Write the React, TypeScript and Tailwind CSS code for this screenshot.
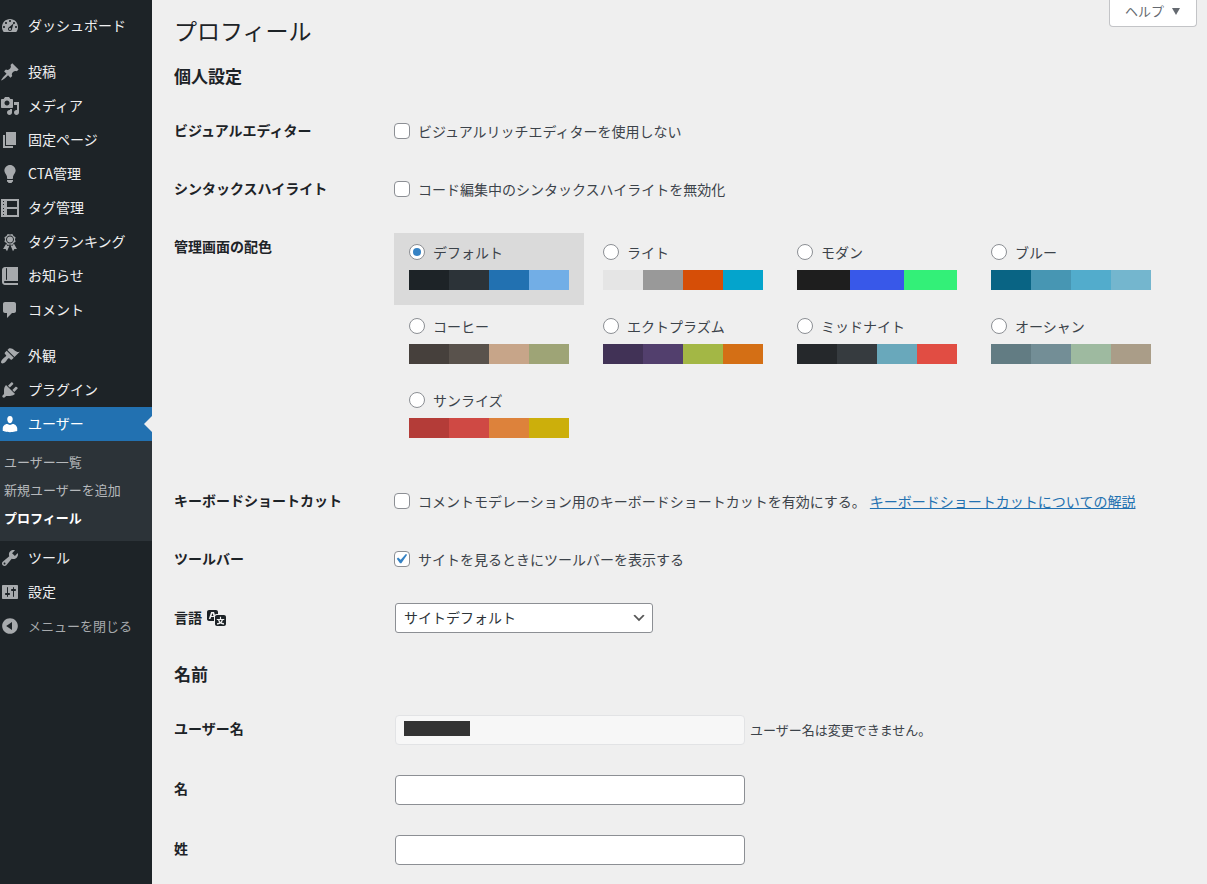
import { useState } from "react";
import type { ReactNode } from "react";
import clsx from "clsx";

const icons = {
  dashboard:
    "M3.76 16h12.48c1.1-1.37 1.76-3.11 1.76-5 0-4.42-3.58-8-8-8s-8 3.58-8 8c0 1.89.66 3.63 1.76 5zM10 4c.55 0 1 .45 1 1s-.45 1-1 1-1-.45-1-1 .45-1 1-1zM6 6c.55 0 1 .45 1 1s-.45 1-1 1-1-.45-1-1 .45-1 1-1zm8 0c.55 0 1 .45 1 1s-.45 1-1 1-1-.45-1-1 .45-1 1-1zm-.5 1.5L12 13c0 1.1-.9 2-2 2s-2-.9-2-2c0-.57.24-1.08.63-1.45zM4 10c.55 0 1 .45 1 1s-.45 1-1 1-1-.45-1-1 .45-1 1-1zm12 0c.55 0 1 .45 1 1s-.45 1-1 1-1-.45-1-1 .45-1 1-1zm-5 3c0-.55-.45-1-1-1s-1 .45-1 1 .45 1 1 1 1-.45 1-1z",
  post: "M10.44 3.02l1.82-1.82 6.36 6.35-1.83 1.82c-1.05-.68-2.48-.57-3.41.36l-.75.75c-.92.93-1.04 2.35-.35 3.41l-1.83 1.82-2.41-2.41-2.8 2.79c-.42.42-3.38 2.71-3.8 2.29s1.86-3.39 2.28-3.81l2.79-2.79L4.1 9.36l1.83-1.82c1.05.69 2.48.57 3.4-.36l.75-.75c.93-.92 1.05-2.35.36-3.41z",
  media:
    "M13 11V4c0-.55-.45-1-1-1h-1.67L9 1H5L3.67 3H2c-.55 0-1 .45-1 1v7c0 .55.45 1 1 1h10c.55 0 1-.45 1-1zM7 4.5c1.38 0 2.5 1.12 2.5 2.5S8.38 9.5 7 9.5 4.5 8.38 4.5 7 5.62 4.5 7 4.5zM14 6h5v10.5c0 1.38-1.12 2.5-2.5 2.5S14 17.88 14 16.5s1.12-2.5 2.5-2.5c.17 0 .34.02.5.05V9h-3V6zm-4 8.05V13h2v3.5c0 1.38-1.12 2.5-2.5 2.5S7 17.88 7 16.5 8.12 14 9.5 14c.17 0 .34.02.5.05z",
  page: "M6 15V2h10v13H6zm-1 1h8v2H3V5h2v11z",
  bulb: "M10 1c3.11 0 5.63 2.52 5.63 5.62 0 1.84-2.03 4.58-2.03 4.58-.33.44-.6 1.25-.6 1.8v1c0 .55-.45 1-1 1H8c-.55 0-1-.45-1-1v-1c0-.55-.27-1.36-.6-1.8 0 0-2.02-2.74-2.02-4.58C4.38 3.52 6.89 1 10 1zM7 16.87V16h6v.87c0 .62-.13 1.13-.75 1.13H12c0 .62-.4 1-1.02 1h-2c-.61 0-.98-.38-.98-1h-.25c-.62 0-.75-.51-.75-1.13z",
  tag: "M1 1h18v18H1zM3 3v1h1V3zM3 6v1h1V6zM3 10v1h1v-1zM3 13v1h1v-1zM3 16v1h1v-1zM7 3v6h10V3zM7 11v6h10v-6z",
  awards:
    "M4.46 5.16L5 7.46l-.54 2.29 2.01 1.24L7.7 13l2.3-.54 2.3.54 1.23-2.01 2.01-1.24L15 7.46l.54-2.3-2-1.24-1.24-2.01-2.3.55-2.29-.54-1.25 2zm5.55 6.34c-2.2 0-3.98-1.79-3.98-3.98 0-2.2 1.78-3.98 3.98-3.98 2.19 0 3.98 1.78 3.98 3.98 0 2.19-1.79 3.98-3.98 3.98zM10 10.5a3 3 0 1 0 0-6 3 3 0 0 0 0 6zM13.85 11.6l-1.28 2.24-2.08-.47L13 19.2l1.4-2.2h2.5zM6.15 11.67l1.25 2.25 2.13-.51L7 19.2 5.6 17H3.1z",
  book: "M5 17h13v2H5c-1.66 0-3-1.34-3-3V4c0-1.66 1.34-3 3-3h13v14H5c-.55 0-1 .45-1 1s.45 1 1 1zm2-3.5v-11c0-.28-.22-.5-.5-.5s-.5.22-.5.5v11c0 .28.22.5.5.5s.5-.22.5-.5z",
  comment:
    "M5 2h9c1.1 0 2 .9 2 2v7c0 1.1-.9 2-2 2h-2l-5 5v-5H5c-1.1 0-2-.9-2-2V4c0-1.1.9-2 2-2z",
  appearance:
    "M14.48 11.06L7.41 3.99l1.5-1.5c.5-.56 2.3-.47 3.51.32 1.21.8 1.43 1.28 2.91 2.1 1.18.64 2.45 1.26 4.45.85zm-.71.71L6.7 4.7 4.93 6.47c-.39.39-.39 1.02 0 1.41l1.06 1.06c.39.39.39 1.03 0 1.42-.6.6-1.43 1.11-2.21 1.69-.35.26-.7.53-1.01.84C1.43 14.23.4 16.08 1.4 17.07c.99 1 2.84-.03 4.18-1.36.31-.31.58-.66.85-1.02.57-.78 1.08-1.61 1.69-2.21.39-.39 1.02-.39 1.41 0l1.06 1.06c.39.39 1.02.39 1.41 0z",
  plugins:
    "M13.11 4.36L9.87 7.6 8 5.73l3.24-3.24c.35-.34 1.05-.2 1.56.32.52.51.66 1.21.31 1.55zm-8 1.77l.91-1.12 9.01 9.01-1.19.84c-.71.71-2.63 1.16-3.82 1.16H6.14L4.9 17.26c-.59.59-1.54.59-2.12 0-.59-.58-.59-1.53 0-2.12l1.24-1.24v-3.88c0-1.13.4-3.19 1.09-3.89zm7.26 3.97l3.24-3.24c.34-.35 1.04-.21 1.55.31.52.51.66 1.21.31 1.55l-3.24 3.25z",
  users:
    "M10 9.25c-2.27 0-2.73-3.44-2.73-3.44C7 4.02 7.82 2 9.97 2c2.16 0 2.98 2.02 2.71 3.81 0 0-.41 3.44-2.68 3.44zM7.23 10L10 11l2.72-1c2.39 0 4.52 2.33 4.52 4.53v2.49s-3.65 1.13-7.24 1.13c-3.65 0-7.24-1.13-7.24-1.13v-2.49c0-2.25 1.94-4.53 4.47-4.53z",
  tools:
    "M16.68 9.77c-1.34 1.34-3.3 1.67-4.95.99l-5.41 6.52c-.99.99-2.59.99-3.58 0s-.99-2.59 0-3.57l6.52-5.42c-.68-1.65-.35-3.61.99-4.95 1.28-1.28 3.12-1.62 4.72-1.06l-2.89 2.89 2.82 2.82 2.86-2.87c.53 1.58.18 3.39-1.08 4.65zM3.81 16.21c.4.39 1.04.39 1.43 0 .4-.4.4-1.04 0-1.43-.39-.4-1.03-.4-1.43 0-.39.39-.39 1.03 0 1.43z",
  settings:
    "M18 16V4c0-.55-.45-1-1-1H3c-.55 0-1 .45-1 1v12c0 .55.45 1 1 1h14c.55 0 1-.45 1-1zM8 11h1c.55 0 1 .45 1 1s-.45 1-1 1H8v1.5c0 .28-.22.5-.5.5s-.5-.22-.5-.5V13H6c-.55 0-1-.45-1-1s.45-1 1-1h1V5.5c0-.28.22-.5.5-.5s.5.22.5.5V11zm5-2h-1c-.55 0-1-.45-1-1s.45-1 1-1h1V5.5c0-.28.22-.5.5-.5s.5.22.5.5V7h1c.55 0 1 .45 1 1s-.45 1-1 1h-1v5.5c0 .28-.22.5-.5.5s-.5-.22-.5-.5V9z",
  collapse:
    "M10 2.16c4.33 0 7.84 3.51 7.84 7.84s-3.51 7.84-7.84 7.84S2.16 14.33 2.16 10 5.71 2.16 10 2.16zm2 11.72V6.12L6.18 9.97z",
  translation:
    "M11 7H9.49c-.63 0-1.25.3-1.59.7L7 5H4.13l-2.39 7h1.69l.74-2H7v4H2c-1.1 0-2-.9-2-2V5c0-1.1.9-2 2-2h7c1.1 0 2 .9 2 2v2zM6.51 9H4.49l1-2.93zM10 8h7c1.1 0 2 .9 2 2v7c0 1.1-.9 2-2 2h-7c-1.1 0-2-.9-2-2v-7c0-1.1.9-2 2-2zm7.25 5v-1.08h-3.17V9.75h-1.16v2.17H9.75V13h1.28c.11.85.56 1.85 1.28 2.62-.87.36-1.89.62-2.31.62-.01.02.22.97.2 1.46.84 0 2.21-.5 3.28-1.15 1.09.65 2.48 1.15 3.34 1.15-.02-.49.2-1.44.2-1.46-.43 0-1.49-.27-2.38-.63.7-.77 1.14-1.77 1.25-2.61h1.36zm-3.81 1.93c-.5-.46-.85-1.13-1.01-1.93h2.09c-.17.8-.51 1.47-1 1.93l-.04.03s-.03-.02-.04-.03z",
};

type IconName = keyof typeof icons;

const Icon = ({ name, className }: { name: IconName; className?: string }) => (
  <svg viewBox="0 0 20 20" aria-hidden="true" className={clsx("size-5 shrink-0", className)}>
    <path d={icons[name]} fill="currentColor" fillRule="evenodd" />
  </svg>
);

const menuGroups: { icon: IconName; label: string }[][] = [
  [{ icon: "dashboard", label: "ダッシュボード" }],
  [
    { icon: "post", label: "投稿" },
    { icon: "media", label: "メディア" },
    { icon: "page", label: "固定ページ" },
    { icon: "bulb", label: "CTA管理" },
    { icon: "tag", label: "タグ管理" },
    { icon: "awards", label: "タグランキング" },
    { icon: "book", label: "お知らせ" },
    { icon: "comment", label: "コメント" },
  ],
  [
    { icon: "appearance", label: "外観" },
    { icon: "plugins", label: "プラグイン" },
    { icon: "users", label: "ユーザー" },
    { icon: "tools", label: "ツール" },
    { icon: "settings", label: "設定" },
  ],
];

const userSubmenu = ["ユーザー一覧", "新規ユーザーを追加", "プロフィール"];

const colorSchemes = [
  { name: "デフォルト", colors: ["#1d2327", "#2c3338", "#2271b1", "#72aee6"] },
  { name: "ライト", colors: ["#e5e5e5", "#999999", "#d64e07", "#04a4cc"] },
  { name: "モダン", colors: ["#1e1e1e", "#3858e9", "#33f078"] },
  { name: "ブルー", colors: ["#096484", "#4796b3", "#52accc", "#74b6ce"] },
  { name: "コーヒー", colors: ["#46403c", "#59524c", "#c7a589", "#9ea476"] },
  { name: "エクトプラズム", colors: ["#413256", "#523f6d", "#a3b745", "#d46f15"] },
  { name: "ミッドナイト", colors: ["#25282b", "#363b3f", "#69a8bb", "#e14d43"] },
  { name: "オーシャン", colors: ["#627c83", "#738e96", "#9ebaa0", "#aa9d88"] },
  { name: "サンライズ", colors: ["#b43c38", "#cf4944", "#dd823b", "#ccaf0b"] },
];

const Sidebar = () => (
  <nav className="w-[152px] shrink-0 bg-[#1d2327] pt-[9px] text-sm text-[#f0f0f1]">
    {menuGroups.map((group, i) => (
      <ul key={i} className="mb-3">
        {group.map(({ icon, label }) => {
          const current = icon === "users";
          return (
            <li key={label}>
              <a
                href="#"
                className={clsx(
                  "flex h-[34px] items-center gap-2",
                  current && "bg-[#2271b1] text-white"
                )}
              >
                <Icon name={icon} className={current ? "text-white" : "text-[#a7aaad]"} />
                <span className="grow pb-0.5">{label}</span>
                {current && (
                  <span className="border-y-8 border-r-8 border-y-transparent border-r-[#efefef]" />
                )}
              </a>
              {current && (
                <ul className="bg-[#2c3338] pt-[7px] pb-[9px] text-[13px]">
                  {userSubmenu.map((item) => (
                    <li key={item}>
                      <a
                        href="#"
                        className={clsx(
                          "flex h-7 items-center px-1",
                          item === "プロフィール" ? "font-semibold text-white" : "text-[#b5b8bb]"
                        )}
                      >
                        {item}
                      </a>
                    </li>
                  ))}
                </ul>
              )}
            </li>
          );
        })}
        {i === menuGroups.length - 1 && (
          <li>
            <button type="button" className="flex h-[34px] items-center gap-2 text-[#a7aaad]">
              <Icon name="collapse" />
              <span className="text-[13px]">メニューを閉じる</span>
            </button>
          </li>
        )}
      </ul>
    ))}
  </nav>
);

const Row = ({
  label,
  htmlFor,
  children,
}: {
  label: ReactNode;
  htmlFor?: string;
  children: ReactNode;
}) => (
  <div className="flex py-[15px]">
    <div className="w-[220px] shrink-0 pt-[3px] leading-5 font-semibold text-[#1d2327]">
      {htmlFor ? <label htmlFor={htmlFor}>{label}</label> : label}
    </div>
    <div className="min-w-0 grow">{children}</div>
  </div>
);

const Checkbox = ({ label, defaultChecked }: { label: string; defaultChecked?: boolean }) => (
  <label className="inline-flex items-center gap-2">
    <span className="grid grid-cols-[16px] grid-rows-[16px] place-items-center">
      <input
        type="checkbox"
        defaultChecked={defaultChecked}
        className="peer col-start-1 row-start-1 size-4 appearance-none rounded border border-[#8c8f94] bg-white"
      />
      <svg
        viewBox="3 2 16 16"
        className="pointer-events-none invisible col-start-1 row-start-1 size-4 peer-checked:visible"
      >
        <path
          d="M14.83 4.89l1.34.94-5.81 8.38H9.02L5.78 9.67l1.34-1.25 2.57 2.4z"
          fill="#3582c4"
        />
      </svg>
    </span>
    {label}
  </label>
);

const inputStyle = "mx-px h-[30px] w-[350px] rounded border px-2";

const App = () => {
  const [scheme, setScheme] = useState("デフォルト");

  return (
    <div className="flex min-h-screen bg-[#efefef] font-['Noto_Sans_CJK_JP','Noto_Sans',sans-serif] text-sm text-[#3c434a]">
      <Sidebar />
      <main className="min-w-0 grow pr-[10px] pl-[22px]">
        <header className="flex items-start justify-between">
          <h1 className="pt-4 text-[23px] leading-7 text-[#1d2327]">プロフィール</h1>
          <button
            type="button"
            className="flex h-[27px] items-center gap-2 rounded-b border border-t-0 border-[#c3c4c7] bg-white px-[15px] pb-1 text-[13px] text-[#646970]"
          >
            ヘルプ
            <svg viewBox="0 0 8 7" aria-hidden="true" className="mr-px h-[7px] w-2">
              <path d="M0 0h8L4 7z" fill="currentColor" />
            </svg>
          </button>
        </header>

        <form>
          <h2 className="mt-5 mb-[14px] text-[17px] leading-6 font-semibold text-[#1d2327]">
            個人設定
          </h2>
          <Row label="ビジュアルエディター">
            <div className="flex h-7 items-center">
              <Checkbox label="ビジュアルリッチエディターを使用しない" />
            </div>
          </Row>
          <Row label="シンタックスハイライト">
            <div className="flex h-7 items-center">
              <Checkbox label="コード編集中のシンタックスハイライトを無効化" />
            </div>
          </Row>
          <Row label="管理画面の配色">
            <div className="mb-1 flex flex-wrap gap-x-1 gap-y-[2px]">
              {colorSchemes.map(({ name, colors }) => (
                <label
                  key={name}
                  className={clsx(
                    "block h-[72px] w-[190px] px-[15px] pt-[9px]",
                    scheme === name && "bg-[#dadada]"
                  )}
                >
                  <span className="flex h-5 items-center gap-2">
                    <input
                      type="radio"
                      name="admin_color"
                      checked={scheme === name}
                      onChange={() => setScheme(name)}
                      className="grid size-4 appearance-none place-items-center rounded-full border border-[#8c8f94] bg-white before:size-2 before:rounded-full checked:before:bg-[#3582c4]"
                    />
                    {name}
                  </span>
                  <span className="mt-2 flex h-5">
                    {colors.map((color) => (
                      <span key={color} className="grow" style={{ backgroundColor: color }} />
                    ))}
                  </span>
                </label>
              ))}
            </div>
          </Row>
          <Row label="キーボードショートカット">
            <div className="flex h-7 items-center gap-1">
              <Checkbox label="コメントモデレーション用のキーボードショートカットを有効にする。" />
              <a href="#" className="text-[#2271b1] underline">
                キーボードショートカットについての解説
              </a>
            </div>
          </Row>
          <Row label="ツールバー">
            <div className="flex h-7 items-center">
              <Checkbox label="サイトを見るときにツールバーを表示する" defaultChecked />
            </div>
          </Row>
          <Row
            htmlFor="locale"
            label={
              <span className="flex items-center gap-[5px] pt-px">
                言語
                <Icon name="translation" />
              </span>
            }
          >
            <div className="mx-px grid w-[258px] items-center">
              <select
                id="locale"
                className="col-start-1 row-start-1 h-[30px] appearance-none rounded-[3px] border border-[#8c8f94] bg-white pr-6 pb-0.5 pl-2 text-[#2c3338]"
              >
                <option>サイトデフォルト</option>
              </select>
              <svg
                viewBox="0 0 20 20"
                className="pointer-events-none col-start-1 row-start-1 mr-[6px] size-4 justify-self-end"
              >
                <path d="M5 6l5 5 5-5 2 1-7 7-7-7 2-1z" fill="#555" />
              </svg>
            </div>
          </Row>

          <h2 className="mt-[14px] mb-[14px] text-[17px] leading-6 font-semibold text-[#1d2327]">
            名前
          </h2>
          <Row htmlFor="user_login" label="ユーザー名">
            <div className="flex items-center gap-1">
              <div className="relative">
                <input
                  id="user_login"
                  type="text"
                  disabled
                  className={clsx(inputStyle, "border-[#e2e3e5] bg-[#f7f7f7]")}
                />
                {/* masked login name */}
                <span className="absolute top-[6px] left-[10px] h-[15px] w-[66px] bg-[#333]" />
              </div>
              <span className="text-[13px]">ユーザー名は変更できません。</span>
            </div>
          </Row>
          <Row htmlFor="first_name" label="名">
            <input
              id="first_name"
              type="text"
              className={clsx(inputStyle, "border-[#8c8f94] bg-white")}
            />
          </Row>
          <Row htmlFor="last_name" label="姓">
            <input
              id="last_name"
              type="text"
              className={clsx(inputStyle, "border-[#8c8f94] bg-white")}
            />
          </Row>
        </form>
      </main>
    </div>
  );
};

export default App;
